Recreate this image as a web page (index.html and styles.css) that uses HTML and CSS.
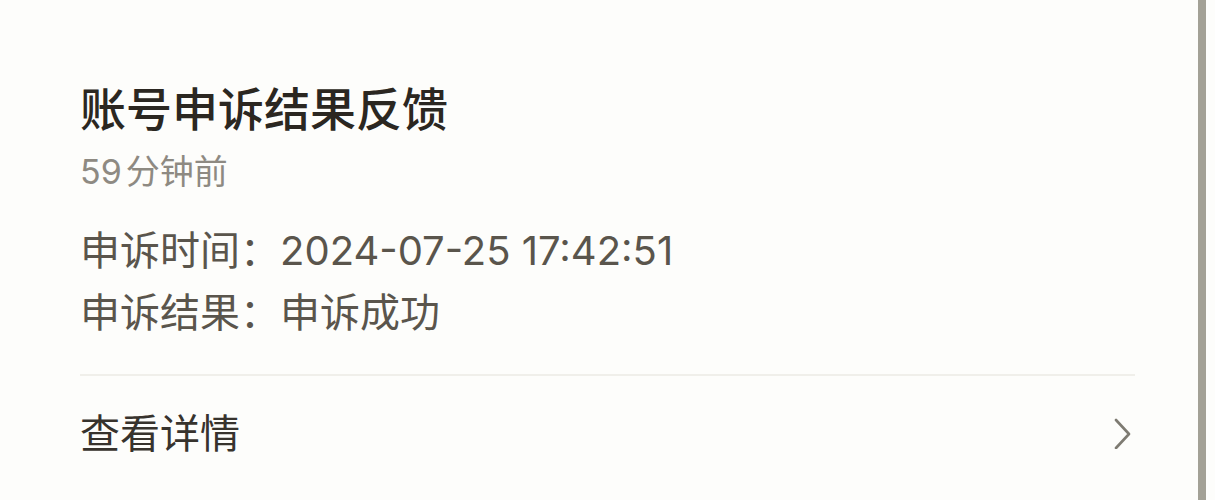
FILE: index.html
```html
<!DOCTYPE html>
<html lang="zh-CN">
<head>
<meta charset="utf-8">
<title>账号申诉结果反馈</title>
<link rel="stylesheet" href="styles.css">
</head>
<body>
<div class="page">
  <main class="card">
    <h1 class="title">账号申诉结果反馈</h1>
    <div class="time"><span class="num">59</span>分钟前</div>
    <div class="info">
      <div class="row"><span class="label">申诉时间：</span><span class="num">2024-07-25 17:42:51</span></div>
      <div class="row"><span class="label">申诉结果：</span><span class="label">申诉成功</span></div>
    </div>
    <div class="divider"></div>
    <div class="detail">
      <span class="detail-text">查看详情</span>
      <svg class="chevron" width="20" height="36" viewBox="0 0 20 36" aria-hidden="true">
        <polyline points="3,7 16,21 3,35" fill="none" stroke="#7e7b72" stroke-width="2.6" stroke-linecap="round" stroke-linejoin="round"/>
      </svg>
    </div>
  </main>
  <div class="bar"></div>
</div>
</body>
</html>
```

FILE: styles.css
```css
html, body {
  margin: 0;
  padding: 0;
  background: #fdfdfb;
}
body {
  font-family: "Noto Sans CJK SC", sans-serif;
  width: 1215px;
  height: 500px;
  overflow: hidden;
}
.page {
  display: flex;
  height: 500px;
}
.card {
  flex: 0 0 1198px;
  box-sizing: border-box;
  padding: 78px 63px 0 80px;
}
.bar {
  flex: 0 0 8px;
  background: #a3a196;
}
.title {
  margin: 0;
  height: 56px;
  font-size: 46px;
  line-height: 56px;
  font-weight: 500;
  color: #2b2721;
}
.num {
  font-family: Inter, "Noto Sans CJK SC", sans-serif;
}
.time {
  margin-top: 14px;
  height: 44px;
  font-size: 34px;
  line-height: 44px;
  color: #8e8a82;
  white-space: nowrap;
}
.time .num {
  margin-right: 4px;
}
.info {
  margin-top: 25px;
}
.row {
  height: 62px;
  font-size: 40px;
  line-height: 62px;
  color: #5a554c;
  white-space: nowrap;
}
.divider {
  margin-top: 33px;
  height: 2px;
  background: #f0efea;
}
.detail {
  display: flex;
  align-items: center;
  justify-content: space-between;
  padding-top: 24px;
}
.detail-text {
  font-size: 40px;
  line-height: 62px;
  color: #37332d;
}
.chevron {
  margin-right: 2px;
}
```
